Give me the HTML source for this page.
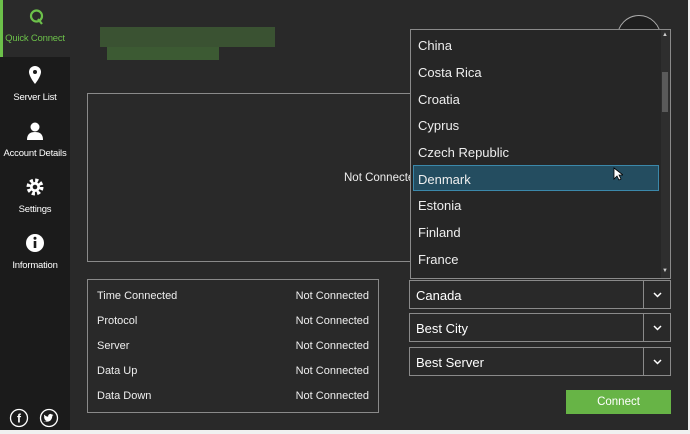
<!DOCTYPE html>
<html><head><style>
*{margin:0;padding:0;box-sizing:border-box}
body{width:690px;height:434px;background:#f0f0f0;font-family:"Liberation Sans",sans-serif;position:relative;overflow:hidden;color:#eee}
.main{position:absolute;left:0;top:0;width:688px;height:430px;background:#292929}
.side{position:absolute;left:0;top:0;width:70px;height:430px;background:#1b1b1b}
.item{position:absolute;left:0;width:70px;height:56px;text-align:center;font-size:9.5px;color:#fff;white-space:nowrap;letter-spacing:-0.2px}
.item svg{display:block;margin:8px auto 7px}
.act{background:#2a2a2a;color:#6cc04a;border-left:3px solid #6cc04a}
.abs{position:absolute}
.box{border:1px solid #8a8a8a}
.row{position:absolute;left:9px;right:9px;font-size:11px;color:#eee}
.row span{float:right}
.list{position:absolute;left:410px;top:29px;width:261px;height:250px;background:#262626;border:1px solid #8a8a8a}
.li{position:absolute;left:7px;font-size:13px;color:#eee}
.combo{position:absolute;left:409px;width:262px;height:29px;border:1px solid #8a8a8a;font-size:13px;color:#fff;padding:7px 6px}
.combo .b{position:absolute;right:0;top:0;width:27px;height:27px;border-left:1px solid #8a8a8a}
.combo .b svg{position:absolute;left:9px;top:11px}
</style></head><body>
<div class="main">
<div class="side">
 <div class="item act" style="top:0;height:57px"><svg width="18" height="18" viewBox="0 0 18 18"><circle cx="8.5" cy="8" r="5.5" fill="none" stroke="#6cc04a" stroke-width="2.2"/><path d="M10 11l4 5" stroke="#6cc04a" stroke-width="2.2"/></svg><div style="margin-left:-3px">Quick Connect</div></div>
 <div class="item" style="top:57px"><svg width="16" height="20" viewBox="0 0 16 20"><path d="M8 1a6 6 0 0 0-6 6c0 4.5 6 12 6 12s6-7.5 6-12a6 6 0 0 0-6-6z" fill="#fff"/><circle cx="8" cy="7" r="2" fill="#1b1b1b"/></svg>Server List</div>
 <div class="item" style="top:113px"><svg width="18" height="20" viewBox="0 0 18 20"><circle cx="9" cy="6" r="4.5" fill="#fff"/><path d="M1 19c0-6 3-8 8-8s8 2 8 8z" fill="#fff"/></svg>Account Details</div>
 <div class="item" style="top:169px"><svg width="20" height="20" viewBox="0 0 20 20"><circle cx="10" cy="10" r="6.5" fill="none" stroke="#fff" stroke-width="4" stroke-dasharray="3 2.1"/><circle cx="10" cy="10" r="5" fill="#fff"/><circle cx="10" cy="10" r="2.3" fill="#1b1b1b"/></svg>Settings</div>
 <div class="item" style="top:225px"><svg width="20" height="20" viewBox="0 0 20 20"><circle cx="10" cy="10" r="9" fill="#fff"/><rect x="8.7" y="8" width="2.6" height="7" fill="#1b1b1b"/><circle cx="10" cy="5.3" r="1.5" fill="#1b1b1b"/></svg>Information</div>
 <svg class="abs" style="left:9px;top:408px" width="20" height="20" viewBox="0 0 20 20"><circle cx="10" cy="10" r="8.5" fill="none" stroke="#fff" stroke-width="1.3"/><text x="10" y="14.5" fill="#fff" font-size="12" font-weight="bold" text-anchor="middle" font-family="Liberation Sans">f</text></svg>
 <svg class="abs" style="left:39px;top:408px" width="20" height="20" viewBox="0 0 20 20"><circle cx="10" cy="10" r="8.5" fill="none" stroke="#fff" stroke-width="1.3"/><path d="M5.5 13c2 1.2 5.5 1 7-2 .6-1 .8-2.2.8-3l1.2-1-1.3.2.9-1-1.2.4a2.2 2.2 0 0 0-3.7 2c-1.8 0-3.2-1-4-2-.6 1.2 0 2.300.7 2.8l-1-.2c0 1 .8 1.8 1.6 2l-1 .1c.3.8 1 1.3 2 1.3-1 .7-2 .9-3 .7z" fill="#fff"/></svg>
</div>
<div class="abs" style="left:100px;top:27px;width:175px;height:20px;background:#3a5232"></div>
<div class="abs" style="left:107px;top:47px;width:112px;height:13px;background:#3c5a33"></div>
<div class="abs" style="left:617px;top:15px;width:44px;height:44px;border-radius:50%;border:1px solid #aaa;background:#1e1e1e"></div>
<div class="abs box" style="left:87px;top:93px;width:330px;height:169px"><div class="abs" style="left:256px;top:78px;font-size:11.5px;white-space:nowrap">Not Connected</div></div>
<div class="abs box" style="left:87px;top:279px;width:292px;height:134px">
 <div class="row" style="top:10px">Time Connected<span>Not Connected</span></div>
 <div class="row" style="top:35px">Protocol<span>Not Connected</span></div>
 <div class="row" style="top:60px">Server<span>Not Connected</span></div>
 <div class="row" style="top:85px">Data Up<span>Not Connected</span></div>
 <div class="row" style="top:110px">Data Down<span>Not Connected</span></div>
</div>
<div class="list">
 <div class="li" style="top:8px">China</div>
 <div class="li" style="top:35px">Costa Rica</div>
 <div class="li" style="top:62px">Croatia</div>
 <div class="li" style="top:88px">Cyprus</div>
 <div class="li" style="top:115px">Czech Republic</div>
 <div class="abs" style="left:2px;top:135px;width:246px;height:26px;background:#244d60;border:1px solid #3b88aa"></div>
 <div class="li" style="top:142px">Denmark</div>
 <div class="li" style="top:168px">Estonia</div>
 <div class="li" style="top:195px">Finland</div>
 <div class="li" style="top:222px">France</div>
 <div class="abs" style="left:250px;top:0;width:9px;height:248px;background:#2e2e2e"></div>
 <div class="abs" style="left:251px;top:42px;width:6px;height:40px;background:#5a5a5a"></div>
 <div class="abs" style="left:251px;top:2px;font-size:6px;color:#ccc">▲</div>
 <div class="abs" style="left:251px;top:238px;font-size:6px;color:#ccc">▼</div>
 <svg class="abs" style="left:202px;top:137px" width="10" height="15" viewBox="0 0 10 15"><path d="M1 1v11l3-3 2 4 2-1-2-4h4z" fill="#fff" stroke="#000" stroke-width=".8"/></svg>
</div>
<div class="combo" style="top:280px">Canada<div class="b"><svg width="9" height="6" viewBox="0 0 9 6"><path d="M1 1l3.5 3.5L8 1" fill="none" stroke="#fff" stroke-width="1.5"/></svg></div></div>
<div class="combo" style="top:313px">Best City<div class="b"><svg width="9" height="6" viewBox="0 0 9 6"><path d="M1 1l3.5 3.5L8 1" fill="none" stroke="#fff" stroke-width="1.5"/></svg></div></div>
<div class="combo" style="top:347px">Best Server<div class="b"><svg width="9" height="6" viewBox="0 0 9 6"><path d="M1 1l3.5 3.5L8 1" fill="none" stroke="#fff" stroke-width="1.5"/></svg></div></div>
<div class="abs" style="left:566px;top:390px;width:105px;height:24px;background:#67b446;color:#fff;font-size:11.5px;text-align:center;line-height:24px">Connect</div>
</div>
</body></html>
